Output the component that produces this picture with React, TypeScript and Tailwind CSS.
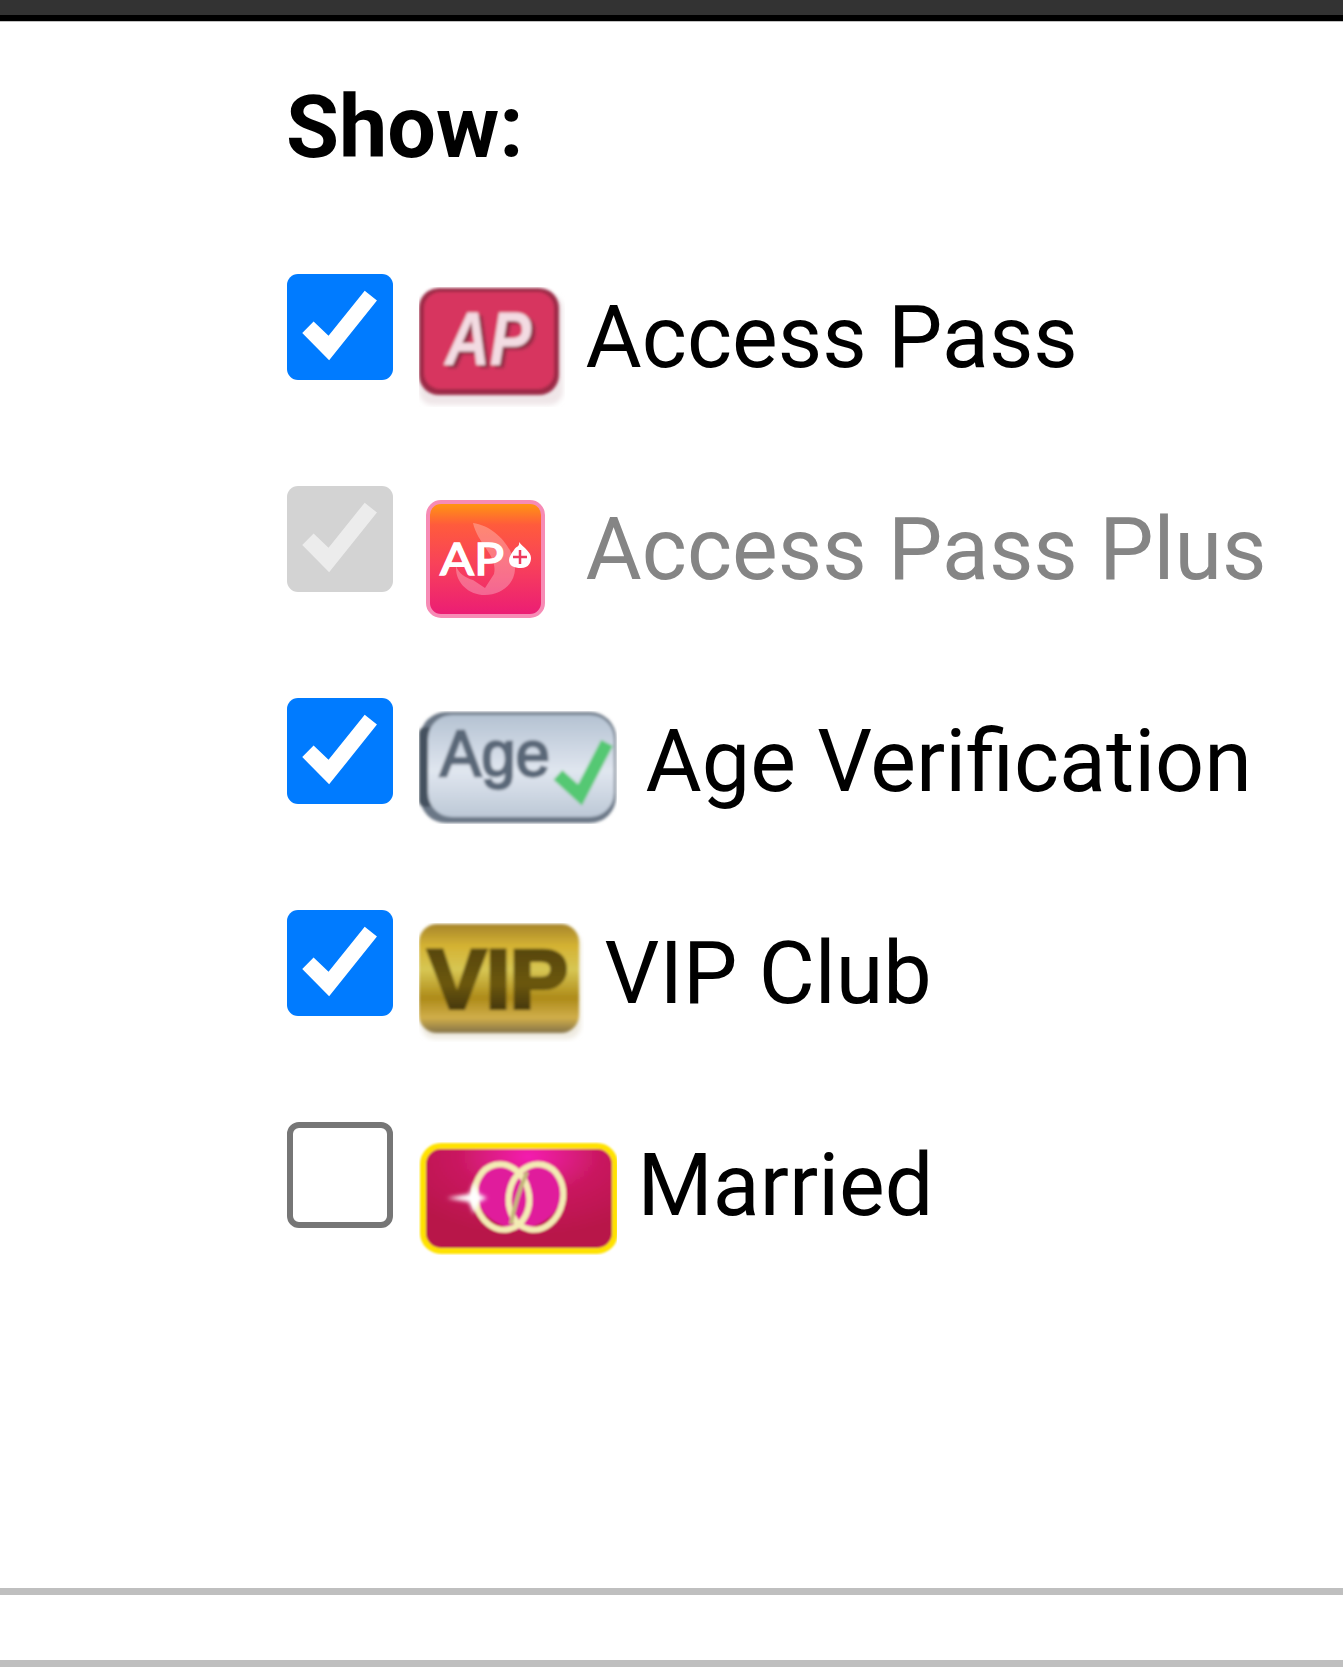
const Check = ({ color }: { color: string }) => (
  <svg viewBox="0 0 106 106" className="w-full h-full">
    <path d="M15.3 59.3 L26.7 47.7 L41.7 62 L78 16.7 L90.3 26.7 L42.3 86.7 Z" fill={color} />
  </svg>
);

const ApIcon = () => (
  <svg viewBox="0 0 146 120" className="w-[146px] h-[120px]">
    <defs>
      <filter id="apBlur"><feGaussianBlur stdDeviation="1.6" /></filter>
      <filter id="apFringe"><feGaussianBlur stdDeviation="2.5" /></filter>
      <filter id="apShadow" x="-10%" y="-10%" width="120%" height="120%">
        <feDropShadow dx="4" dy="3" stdDeviation="1" floodColor="#8f2a45" />
      </filter>
    </defs>
    <rect x="0" y="8" width="144" height="110" rx="14" fill="#efe6e8" filter="url(#apFringe)" />
    <g filter="url(#apBlur)">
      <rect x="0" y="1" width="140" height="107" rx="20" fill="#9c2a46" />
      <rect x="5" y="5" width="130" height="97" rx="16" fill="#d7365f" />
      <text x="26" y="78" fontFamily="Liberation Sans" fontWeight="700" fontStyle="italic" fontSize="76" fill="#f3dbe2" textLength="86" lengthAdjust="spacingAndGlyphs" filter="url(#apShadow)">AP</text>
    </g>
  </svg>
);

const ApPlusIcon = () => (
  <svg viewBox="0 0 119 118" className="w-[119px] h-[118px]">
    <defs>
      <linearGradient id="apPlusGrad" x1="0" y1="0" x2="0" y2="1">
        <stop offset="0" stopColor="#ff9a0e" />
        <stop offset="0.2" stopColor="#ff5b3c" />
        <stop offset="0.55" stopColor="#f8415a" />
        <stop offset="1" stopColor="#eb1c75" />
      </linearGradient>
    </defs>
    <rect x="2" y="2" width="115" height="114" rx="13" fill="url(#apPlusGrad)" stroke="#f78bb5" strokeWidth="4" />
    <path d="M47 23 C70 26 89 50 89 68 C89 85 74 95 59 95 C42 95 29 82 30 66 C33 74 40 78 47 80 L59 88 L68 74 C72 55 52 45 47 23 Z" fill="#ffffff" opacity="0.28" />
    <text x="14" y="75" fontFamily="Lato" fontWeight="400" fontSize="45" fill="#ffffff" stroke="#ffffff" strokeWidth="1.5" textLength="64" lengthAdjust="spacingAndGlyphs">AP</text>
    <path d="M93 42 C94 47 90 46 88 50 C85 54 83 57 83 60 C83 66 88 68 95 68 C103 68 105 62 105 58 C105 52 98 48 93 42 Z" fill="#ffffff" />
    <path d="M94 50 V64 M87 57 H101" stroke="#ee3a5e" strokeWidth="2.5" />
  </svg>
);

const AgeIcon = () => (
  <svg viewBox="0 0 198 113" className="w-[198px] h-[113px]">
    <defs>
      <linearGradient id="ageGrad" x1="0" y1="0" x2="0" y2="1">
        <stop offset="0" stopColor="#b4c2d2" />
        <stop offset="0.55" stopColor="#e0e6ef" />
        <stop offset="1" stopColor="#bcc8d6" />
      </linearGradient>
      <filter id="ageBlur"><feGaussianBlur stdDeviation="1.4" /></filter>
    </defs>
    <g filter="url(#ageBlur)">
      <rect x="1" y="1" width="196" height="111" rx="26" fill="#6a7786" />
      <rect x="0" y="16" width="14" height="80" rx="6" fill="#45515e" />
      <rect x="9" y="4" width="186" height="102" rx="24" fill="url(#ageGrad)" />
      <text x="21" y="65" fontFamily="Liberation Sans" fontSize="65" fill="#5a6778" stroke="#5a6778" strokeWidth="2.5" textLength="110" lengthAdjust="spacingAndGlyphs">Age</text>
      <path d="M139 64 L161 84 L188 32" stroke="#54c873" strokeWidth="13" fill="none" />
    </g>
  </svg>
);

const VipIcon = () => (
  <svg viewBox="0 0 165 119" className="w-[165px] h-[119px]">
    <defs>
      <linearGradient id="vipGrad" x1="0" y1="0" x2="0" y2="1">
        <stop offset="0" stopColor="#a6842a" />
        <stop offset="0.2" stopColor="#d4b232" />
        <stop offset="0.42" stopColor="#d7c653" />
        <stop offset="0.68" stopColor="#ad8a18" />
        <stop offset="0.86" stopColor="#d0ae4a" />
        <stop offset="1" stopColor="#85734a" />
      </linearGradient>
      <linearGradient id="vipText" x1="0" y1="0" x2="0" y2="1">
        <stop offset="0" stopColor="#4e3f08" />
        <stop offset="0.55" stopColor="#6b5710" />
        <stop offset="1" stopColor="#2e2304" />
      </linearGradient>
      <filter id="vipBlur"><feGaussianBlur stdDeviation="1.4" /></filter>
      <filter id="vipFringe"><feGaussianBlur stdDeviation="2.5" /></filter>
    </defs>
    <rect x="2" y="8" width="160" height="108" rx="14" fill="#eeeae0" filter="url(#vipFringe)" />
    <g filter="url(#vipBlur)">
      <rect x="0" y="1" width="160" height="109" rx="18" fill="url(#vipGrad)" />
      <text x="9" y="85" fontFamily="Liberation Sans" fontWeight="700" fontSize="83" fill="url(#vipText)" stroke="url(#vipText)" strokeWidth="4" textLength="140" lengthAdjust="spacingAndGlyphs">VIP</text>
    </g>
  </svg>
);

const MarriedIcon = () => (
  <svg viewBox="0 0 198 113" className="w-[198px] h-[113px]">
    <defs>
      <radialGradient id="marriedGrad" cx="0.55" cy="0.1" r="0.75">
        <stop offset="0" stopColor="#f41fb0" />
        <stop offset="0.5" stopColor="#c9195f" />
        <stop offset="1" stopColor="#b8134a" />
      </radialGradient>
      <filter id="marriedBlur"><feGaussianBlur stdDeviation="1.3" /></filter>
      <filter id="marriedGlow"><feGaussianBlur stdDeviation="2" /></filter>
    </defs>
    <g filter="url(#marriedBlur)">
      <rect x="4" y="4" width="192" height="105" rx="18" fill="url(#marriedGrad)" stroke="#ffe200" strokeWidth="6" />
      <path d="M100 88 C76 84 57 70 57 50 C57 28 84 16 100 34 C116 16 143 28 143 50 C143 70 124 84 100 88 Z" fill="#e01f9c" />
      <ellipse cx="83" cy="55" rx="27" ry="33" fill="none" stroke="#f3ecb4" strokeWidth="6" transform="rotate(-12 83 55)" />
      <ellipse cx="117" cy="55" rx="27" ry="33" fill="none" stroke="#f3ecb4" strokeWidth="6" transform="rotate(12 117 55)" />
      <path d="M92 82 C96 60 102 44 108 30" fill="none" stroke="#c3b77a" strokeWidth="4" />
    </g>
    <path d="M28 56 L50 52 L55 40 L60 52 L68 56 L60 60 L55 72 L50 60 Z" fill="#ffffff" filter="url(#marriedGlow)" />
  </svg>
);

const Option = ({
  state,
  icon,
  label,
  gap,
  iconTop,
  disabled,
}: {
  state: "on" | "off" | "disabled";
  icon: React.ReactNode;
  label: string;
  gap: string;
  iconTop: string;
  disabled?: boolean;
}) => (
  <div className="flex items-start h-[212px]">
    {state === "on" && (
      <div className="w-[105.6px] h-[105.6px] shrink-0 rounded-[11px] bg-[#007bff]">
        <Check color="#ffffff" />
      </div>
    )}
    {state === "disabled" && (
      <div className="w-[105.6px] h-[105.6px] shrink-0 rounded-[11px] bg-[#d3d3d3]">
        <Check color="#ececec" />
      </div>
    )}
    {state === "off" && (
      <div className="w-[105.6px] h-[105.6px] shrink-0 rounded-[12px] border-[6px] border-[#767676] bg-white" />
    )}
    <div className={`${gap} ${iconTop}`}>{icon}</div>
    <span
      className={`text-[86.2px] leading-[100px] mt-[14px] whitespace-nowrap ${
        disabled ? "text-[#858585]" : "text-black"
      }`}
    >
      {label}
    </span>
  </div>
);

export default function App() {
  return (
    <div className="w-[1343px] h-[1671px] bg-white overflow-hidden font-['Roboto',sans-serif]">
      <div className="h-[15px] bg-[#333333]" />
      <div className="h-[6px] bg-black" />
      <div className="h-px bg-[#c0c0c0]" />
      <div className="pl-[287px] pt-[56px] h-[1566px]">
        <h1 className="text-[86.2px] leading-[100px] font-bold text-black -ml-px">Show:</h1>
        <div className="mt-[96px]">
          <Option state="on" icon={<ApIcon />} label="Access Pass" gap="ml-[26px] mr-[21px]" iconTop="mt-[13px]" />
          <Option state="disabled" icon={<ApPlusIcon />} label="Access Pass Plus" gap="ml-[33px] mr-[41px]" iconTop="mt-[14px]" disabled />
          <Option state="on" icon={<AgeIcon />} label="Age Verification" gap="ml-[26px] mr-[29px]" iconTop="mt-[13px]" />
          <Option state="on" icon={<VipIcon />} label="VIP Club" gap="ml-[26px] mr-[21px]" iconTop="mt-[13px]" />
          <Option state="off" icon={<MarriedIcon />} label="Married" gap="ml-[26px] mr-[21px]" iconTop="mt-[20px]" />
        </div>
      </div>
      <div className="h-[7px] bg-[#bfbfbf]" />
      <div className="h-[65px]" />
      <div className="h-[7px] bg-[#bfbfbf]" />
    </div>
  );
}
